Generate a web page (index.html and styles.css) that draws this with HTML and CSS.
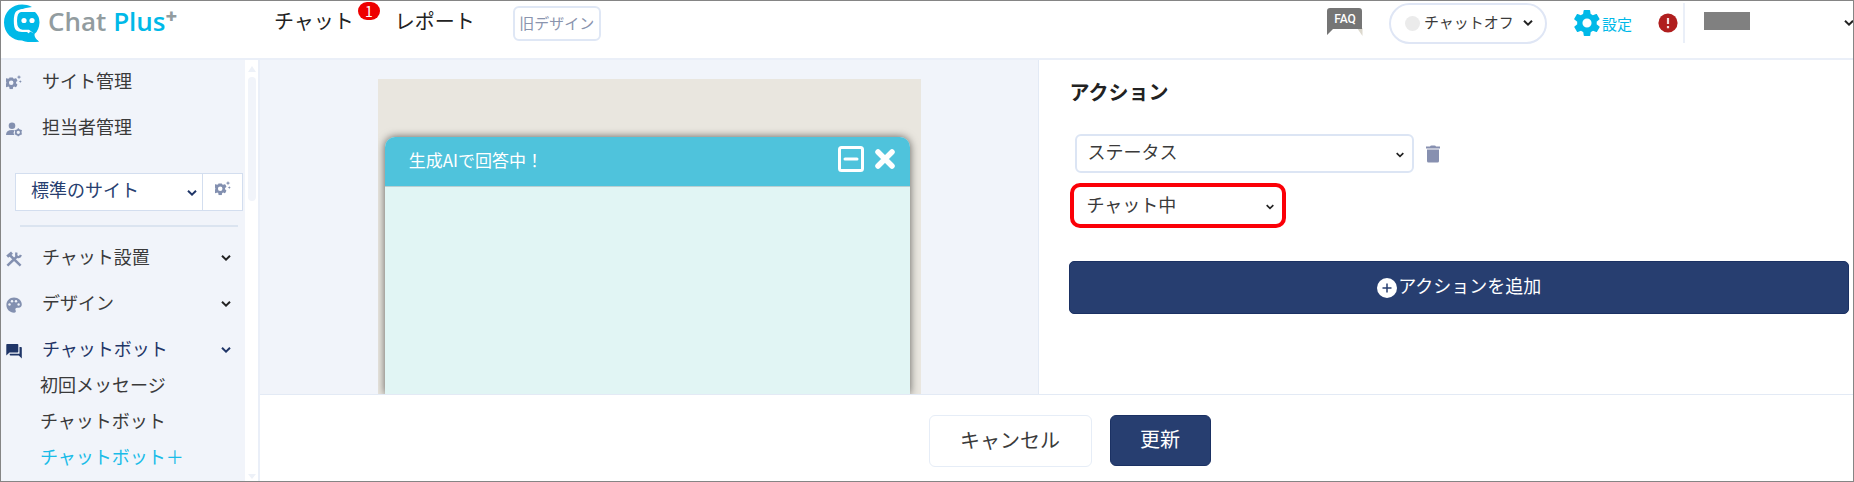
FILE: index.html
```html
<!DOCTYPE html>
<html lang="ja">
<head>
<meta charset="utf-8">
<meta name="viewport" content="width=device-width, initial-scale=1">
<title>Chat Plus</title>
<link rel="stylesheet" href="styles.css">
</head>
<body>
<svg class="defs" width="0" height="0" aria-hidden="true">
  <symbol id="chevron" viewBox="0 0 12 8"><path d="M2 1.800 6 5.600 10 1.800" fill="none" stroke="currentColor" stroke-width="2"/></symbol>
  <symbol id="gear" viewBox="2 2 20 20"><path fill="currentColor" fill-rule="evenodd" d="M19.4 13c0-.3.1-.6.1-1s0-.7-.1-1l2.1-1.6c.2-.2.3-.4.1-.7l-2-3.4c-.1-.2-.4-.3-.6-.2l-2.5 1a7 7 0 0 0-1.7-1l-.4-2.7c0-.2-.2-.4-.5-.4h-4c-.2 0-.4.2-.5.4L9 5.1a7 7 0 0 0-1.7 1l-2.500-1c-.2-.1-.5 0-.6.2l-2 3.400c-.1.2-.1.5.1.7L4.500 11a8 8 0 0 0 0 2l-2.100 1.600c-.2.2-.3.4-.1.7l2 3.400c.1.2.4.3.6.2l2.500-1a7 7 0 0 0 1.700 1l.4 2.700c0 .2.2.4.5.4h4c.2 0 .5-.2.5-.4l.4-2.700a7 7 0 0 0 1.700-1l2.500 1c.2.1.5 0 .6-.2l2-3.400c.1-.2.1-.5-.1-.7zM12 15.500a3.500 3.500 0 1 1 0-7 3.500 3.500 0 0 1 0 7z"/></symbol>
  <symbol id="gears" viewBox="0 0 16 16"><svg x="0" y="2.500" width="13" height="13" viewBox="2 2 20 20"><use href="#gear"/></svg><path fill="currentColor" d="m13 0 .7 1.400 1.600.7-1.600.7-.7 1.400-.7-1.400-1.600-.7 1.600-.7zM14.300 5.200l.5.900 1 .4-1 .5-.5.900-.5-.9-1-.5 1-.4z"/></symbol>
</svg>
<div class="app">
  <header class="topbar">
    <a class="logo" href="#" aria-label="Chat Plus+">
      <svg class="logo-mark" viewBox="0 0 36 38" aria-hidden="true">
        <path fill="#00b9e8" d="M28 3C14-4 0 5 0 18.500C0 29 8 36.500 18 36.500Q26 39.500 35 37.400Q29 34 26 29L20 26H15Q11 25 11 17Q11 8 16 6Q22 3.500 28 3z"/>
        <path fill="#fff" d="M34 7.500Q31 4 25 4.500Q15 4.500 12 7.500Q9.800 10 9.800 17Q9.800 24 12 26.200Q14 28 18 28H23Q26.500 31.500 32 33L36 26z"/>
        <path fill="#00b9e8" d="M17 8H31Q35.500 12 35.500 18.500Q35 26.500 30.500 30L25 25.700H18.500Q13 25.500 13 17Q13 8.500 17 8z"/>
        <path fill="#00b9e8" d="M26 27.500L30.500 29.500Q30 34 35 37.400Q28 38 22 34z"/>
        <circle cx="20" cy="16.500" r="2.600" fill="#fff"/><circle cx="28" cy="16.500" r="2.600" fill="#fff"/>
      </svg>
      <span class="logo-text">Chat <b>Plus</b><sup>+</sup></span>
    </a>
    <nav class="topnav">
      <a href="#" class="nav-chat">チャット<span class="badge">1</span></a>
      <a href="#">レポート</a>
    </nav>
    <button class="old-design" type="button">旧デザイン</button>
    <div class="tools">
      <a class="faq" href="#"><svg viewBox="0 0 36 28" width="36" height="28" aria-hidden="true"><path fill="#dcd8cd" d="M30 20l5.500 8V20z"/><path fill="#757575" d="M3 0h29q3 0 3 3v18H6L0 27V3q0-3 3-3z"/></svg><span>FAQ</span></a>
      <button class="status" type="button"><i></i><span>チャットオフ</span><svg class="chev"><use href="#chevron"/></svg></button>
      <a class="settings" href="#"><svg><use href="#gear"/></svg>設定</a>
      <a class="alert" href="#" aria-label="通知"><svg viewBox="0 0 20 20" width="20" height="20"><circle cx="10" cy="10" r="9.600" fill="#b01e1e"/><path stroke="#f4dede" stroke-width="2.200" d="M10 5v6M10 13v2.200"/></svg></a>
      <div class="account"><span></span><svg class="chev"><use href="#chevron"/></svg></div>
    </div>
  </header>
  <div class="body">
    <aside class="sidebar">
      <div class="side-main">
        <ul class="menu">
          <li><a href="#"><svg class="ico"><use href="#gears"/></svg>サイト管理</a></li>
          <li><a href="#"><svg class="ico" viewBox="0 0 16 16"><g fill="currentColor"><circle cx="6" cy="4.700" r="3.300"/><path d="M0 14q0-5 6-5l2.500.3Q6.800 12 8.300 14z"/></g><circle cx="12.300" cy="11.300" r="2.500" fill="none" stroke="currentColor" stroke-width="1.700"/><path stroke="currentColor" stroke-width="1.300" d="M12.300 7.300v1.500M12.300 13.800v1.500M8.800 9.300l1.300.7M14.500 12.600l1.300.7M8.800 13.300l1.300-.7M14.500 10l1.300-.7"/></svg>担当者管理</a></li>
        </ul>
        <div class="site-picker">
          <div class="select"><select aria-label="サイト"><option>標準のサイト</option></select><svg class="chev"><use href="#chevron"/></svg></div>
          <button type="button" aria-label="サイト設定"><svg class="ico"><use href="#gears"/></svg></button>
        </div>
        <hr>
        <ul class="menu">
          <li><a href="#"><svg class="ico" viewBox="0 0 16 16" fill="none" stroke="currentColor"><path stroke-width="2.500" d="M14.600 14.600 3.700 4M1.400 14.600 11.500 5"/><path stroke-width="3" d="M1.200 5.600 6 1.600"/><path stroke-width="2.300" d="M10.500 1.500q-1 4 1.500 4.500 2 .5 3-2"/></svg>チャット設置<svg class="chev"><use href="#chevron"/></svg></a></li>
          <li><a href="#"><svg class="ico" viewBox="0 0 16 16"><path fill="currentColor" d="M8 .5C3.600.5.400 3.800.4 8s3.400 7.700 7.600 7.700c1.600 0 2.300-1.300 1.600-2.500-.7-1.400.1-2.500 1.500-2.500h1.500c2 0 3.200-1.300 3.200-3.200C15.800 3.600 12.300.5 8 .5z"/><g fill="#f1f4fa"><circle cx="3.500" cy="7.500" r="1.200"/><circle cx="6" cy="4.200" r="1.200"/><circle cx="10" cy="4.200" r="1.200"/><circle cx="12.600" cy="7.500" r="1.200"/></g></svg>デザイン<svg class="chev"><use href="#chevron"/></svg></a></li>
          <li class="open"><a href="#"><svg class="ico" viewBox="0 0 16 16"><path fill="currentColor" d="M1 1h10.500q.8 0 .8.800v7q0 .8-.8.8H3.500L.3 12.500V1.800Q.3 1 1 1zM13.500 4H15q.8 0 .8.800V15.500l-3-3H4.500q-.8 0-.8-.8v-1h9.800z"/></svg>チャットボット<svg class="chev"><use href="#chevron"/></svg></a></li>
        </ul>
        <ul class="submenu">
          <li><a href="#">初回メッセージ</a></li>
          <li><a href="#">チャットボット</a></li>
          <li><a href="#" class="current">チャットボット＋</a></li>
        </ul>
      </div>
      <div class="track" aria-hidden="true"><i class="up"></i><i class="thumb"></i><i class="down"></i></div>
    </aside>
    <main class="main">
      <div class="panes">
        <section class="canvas">
          <div class="preview">
            <div class="widget">
              <div class="widget-head">
                <span>生成AIで回答中！</span>
                <button type="button" aria-label="最小化"><svg viewBox="0 0 26 26" width="26" height="26" fill="none" stroke="#fff"><rect x="1.500" y="1.500" width="23" height="23" rx="2" stroke-width="3"/><path d="M7 13h12" stroke-width="3" stroke-linecap="round"/></svg></button>
                <button type="button" aria-label="閉じる"><svg viewBox="0 0 22 22" width="22" height="22"><path d="M4 4l14 14M18 4 4 18" stroke="#fff" stroke-width="5.500" stroke-linecap="round"/></svg></button>
              </div>
            </div>
          </div>
        </section>
        <section class="actions">
          <h2>アクション</h2>
          <div class="field">
            <div class="select wide"><select aria-label="アクション種別"><option>ステータス</option></select><svg class="chev"><use href="#chevron"/></svg></div>
            <button class="trash" type="button" aria-label="削除"><svg viewBox="0 0 14 18" width="14" height="18"><path fill="#8790b0" d="M4 1.500Q4.300.5 5.500.5h3q1.200 0 1.500 1h4v2H0v-2zM1 4.500h12v11.500q0 1.500-1.500 1.500h-9Q1 17.500 1 16z"/></svg></button>
          </div>
          <div class="select marked"><select aria-label="ステータス"><option>チャット中</option></select><svg class="chev"><use href="#chevron"/></svg></div>
          <button class="add" type="button"><svg viewBox="0 0 20 20" width="20" height="20"><circle cx="10" cy="10" r="10" fill="#fff"/><path d="M5.500 10h9M10 5.500v9" stroke="#273e70" stroke-width="1.500"/></svg><span>アクションを追加</span></button>
        </section>
      </div>
      <footer class="footer">
        <button class="cancel" type="button">キャンセル</button>
        <button class="update" type="button">更新</button>
      </footer>
    </main>
  </div>
</div>
</body>
</html>
```
FILE: styles.css
```css
* { box-sizing: border-box; }
body { margin: 0; font-family: "Noto Sans CJK JP", sans-serif; font-size: 18px; line-height: 1; color: #3a3a3a; background: #fff; }
a { color: inherit; text-decoration: none; }
ul { margin: 0; padding: 0; list-style: none; }
button, select { font: inherit; color: inherit; margin: 0; padding: 0; border: 0; background: none; }
svg { display: block; flex: none; }
.defs { position: absolute; }
.app { display: flex; flex-direction: column; min-height: 100vh; border: 1px solid #858585; overflow: hidden; }
.chev { width: 12px; height: 8px; }
.ico { width: 16px; height: 16px; color: #8390b0; }

.topbar { display: flex; align-items: center; height: 59px; padding: 0 0 13px 3px; border-bottom: 2px solid #eaeff8; }
.logo { display: flex; align-items: center; gap: 8px; width: 270px; }
.logo-mark { width: 36px; height: 38px; }
.logo-text { padding-bottom: 4px; font-family: "Open Sans", "Noto Sans", sans-serif; font-size: 26px; font-weight: 600; color: #929c9f; white-space: nowrap; }
.logo-text b { font-weight: 600; color: #00b9e8; }
.logo-text sup { font-size: 20px; font-weight: 800; line-height: 0; vertical-align: 8px; }
.topnav { display: flex; gap: 41px; padding-bottom: 4px; font-size: 20px; color: #222; }
.nav-chat { position: relative; }
.badge { position: absolute; left: 84px; top: -9px; width: 22px; height: 18px; border-radius: 9px; background: #e00; color: #fff; font-size: 14px; line-height: 18px; text-align: center; }
.old-design { margin-left: 38px; width: 88px; height: 35px; padding-bottom: 2px; border: 2px solid #dfe7f5; border-radius: 6px; font-size: 15px; color: #8a94ae; }
.tools { display: flex; align-items: center; margin-left: auto; }
.faq { display: grid; margin: 0 26px 2px 0; }
.faq > * { grid-area: 1 / 1; }
.faq span { font: 500 12px/22px Roboto, sans-serif; color: #fff; text-align: center; }
.status { display: flex; align-items: center; gap: 4px; width: 158px; height: 41px; padding: 0 11px 0 14px; border: 2px solid #dfe6f5; border-radius: 21px; font-size: 15px; white-space: nowrap; }
.status i { width: 15px; height: 15px; border-radius: 50%; background: #ebebeb; }
.status span { padding-bottom: 4px; }
.status .chev { margin-left: auto; color: #222; }
.settings { display: flex; align-items: center; gap: 2px; margin-left: 27px; font-size: 15px; color: #00b9e8; }
.settings svg { width: 26px; height: 26px; }
.alert { margin-left: 26px; }
.account { display: flex; align-items: center; justify-content: space-between; width: 172px; height: 40px; margin-left: 5px; padding-left: 19px; border-left: 2px solid #eaeff8; margin-right: -2px; }
.account span { width: 46px; height: 18px; margin-bottom: 4px; background: #808080; }
.account .chev { color: #222; }

.body { display: flex; flex: 1; }
.sidebar { display: flex; flex: none; width: 259px; border-right: 2px solid #eaeff8; background: #f1f4fa; }
.side-main { flex: 1; padding: 2px 0 5px; }
.menu { display: flex; flex-direction: column; gap: 10px; }
.menu a { display: flex; align-items: center; gap: 20px; height: 36px; padding: 0 13px 0 5px; white-space: nowrap; }
.menu .ico { margin-top: 5px; }
.menu .chev { margin: 4px 0 0 auto; color: #222; }
.menu .open a, .menu .open .ico, .menu .open .chev { color: #1f3567; }
.site-picker { display: flex; margin: 29px 2px 14px 14px; border: 1px solid #d3deef; background: #fff; color: #273e70; }
.site-picker .select { flex: 1; }
.site-picker select { height: 36px; padding: 0 15px 6px; }
.site-picker button { width: 40px; border-left: 1px solid #d3deef; padding-bottom: 6px; display: grid; place-items: center; }
hr { height: 2px; margin: 0 7px 11px 19px; border: 0; background: #dbe4f0; }
.submenu a { display: block; padding-left: 39px; line-height: 36px; white-space: nowrap; }
.submenu .current { color: #19bce8; }
.track { display: flex; flex-direction: column; align-items: center; width: 13px; padding: 6px 0 2px; background: #fff; }
.track .up { border: 4px solid transparent; border-top: 0; border-bottom: 6px solid #edf1f8; }
.track .thumb { width: 8px; height: 124px; margin-top: 5px; border-radius: 4px; background: #f1f4fa; }
.track .down { margin-top: auto; border: 4px solid transparent; border-bottom: 0; border-top: 5px solid #edf1f8; }

.select { display: grid; align-items: center; }
.select > * { grid-area: 1 / 1; }
.select select { width: 100%; appearance: none; line-height: 24px; }
.select .chev { justify-self: end; margin: 2px 7px 0 0; pointer-events: none; color: #222; }
.site-picker .select .chev { margin-right: 4px; color: #1f3567; }

.main { display: flex; flex: 1; flex-direction: column; min-width: 0; }
.panes { display: grid; grid-template-columns: 389fr 406fr; flex: 1; }
.canvas { display: flex; justify-content: center; padding-top: 19px; border-right: 1px solid #e3eaf5; background: #f1f4fa; }
.preview { display: flex; flex: 0 1 543px; padding: 58px 11px 0 7px; background: #e9e6df; overflow: hidden; }
.widget { flex: 1; border-radius: 10px 10px 0 0; background: #e1f5f4; box-shadow: 0 0 8px rgba(0, 0, 0, .6); }
.widget-head { display: flex; align-items: center; gap: 10px; height: 50px; padding: 0 14px 5px 24px; border-bottom: 1px solid #b9cfd2; border-radius: 10px 10px 0 0; background: #4fc3dc; color: #fff; font-size: 17px; }
.widget-head span { margin-right: auto; }
.actions { padding: 22px 4px 16px 30px; }
h2 { margin: 0 0 32px; font-size: 20px; font-weight: 700; color: #222; }
.field { display: flex; align-items: center; gap: 12px; margin: 0 0 10px 6px; }
.wide { flex: 0 1 339px; border: 2px solid #dce5f4; border-radius: 6px; }
.select.wide select { height: 35px; padding: 0 0 5px 10px; }
.marked { width: 216px; margin-left: 1px; border: 4px solid #fb0007; border-radius: 10px; }
.select.marked select { height: 37px; padding: 0 0 4px 12px; }
.select.marked .chev, .select.wide .chev { width: 10px; }
.add { display: flex; align-items: center; justify-content: center; gap: 1px; width: 100%; height: 53px; margin-top: 33px; border: 1px solid #1b3163; border-radius: 5px; background: #273e70; color: #fff; }
.add span { padding-bottom: 5px; }
.footer { display: flex; justify-content: center; gap: 18px; padding: 20px 0 14px 26px; border-top: 1px solid #e3eaf5; font-size: 20px; }
.footer button { height: 52px; padding-bottom: 3px; border-radius: 6px; }
.cancel { width: 163px; border: 1px solid #e6edf7; }
.footer .update { width: 101px; height: 51px; border: 1px solid #1b3163; background: #273e70; color: #fff; }
```
